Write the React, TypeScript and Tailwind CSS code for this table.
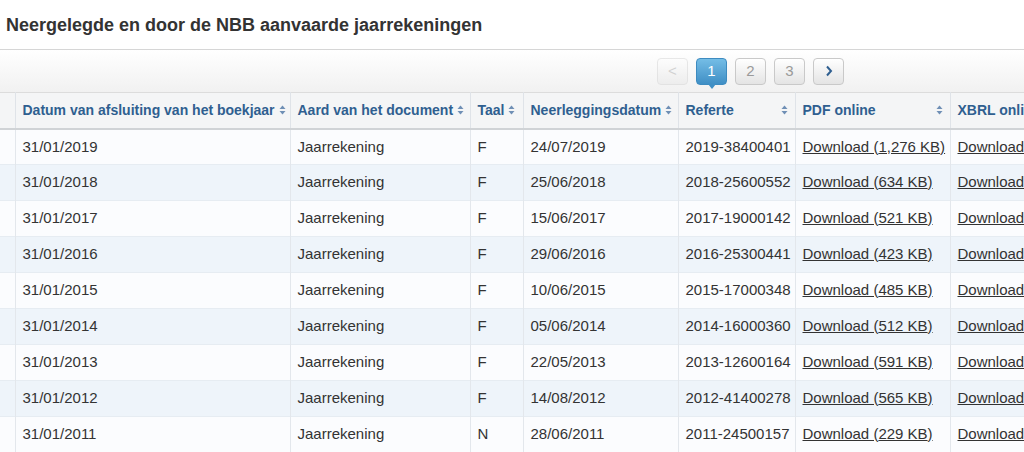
import React from 'react';

const rows = [
  { date: '31/01/2019', lang: 'F', filed: '24/07/2019', ref: '2019-38400401', size: '1,276 KB' },
  { date: '31/01/2018', lang: 'F', filed: '25/06/2018', ref: '2018-25600552', size: '634 KB' },
  { date: '31/01/2017', lang: 'F', filed: '15/06/2017', ref: '2017-19000142', size: '521 KB' },
  { date: '31/01/2016', lang: 'F', filed: '29/06/2016', ref: '2016-25300441', size: '423 KB' },
  { date: '31/01/2015', lang: 'F', filed: '10/06/2015', ref: '2015-17000348', size: '485 KB' },
  { date: '31/01/2014', lang: 'F', filed: '05/06/2014', ref: '2014-16000360', size: '512 KB' },
  { date: '31/01/2013', lang: 'F', filed: '22/05/2013', ref: '2013-12600164', size: '591 KB' },
  { date: '31/01/2012', lang: 'F', filed: '14/08/2012', ref: '2012-41400278', size: '565 KB' },
  { date: '31/01/2011', lang: 'N', filed: '28/06/2011', ref: '2011-24500157', size: '229 KB' },
];

const SortIcon = () => (
  <svg width="7" height="10" viewBox="0 0 7 10" className="inline-block shrink-0">
    <path d="M3.5 0.5 L6.5 4 L0.5 4 Z" fill="#6f8fb5" />
    <path d="M3.5 9.5 L6.5 6 L0.5 6 Z" fill="#6f8fb5" />
  </svg>
);

const Head = ({ label, spread }: { label: string; spread?: boolean }) => (
  <th className="h-[36px] px-[7px] text-left font-bold text-[14px] text-[#2f5f90] border-r border-[#dfe3e8] whitespace-nowrap">
    <div className={spread ? 'flex items-center justify-between' : 'flex items-center gap-[4px]'}>
      <span>{label}</span>
      <SortIcon />
    </div>
  </th>
);

const PageBtn = ({ children, active, faded }: { children: React.ReactNode; active?: boolean; faded?: boolean }) => (
  <div
    className={
      'relative w-[31px] h-[27px] rounded-[4px] flex items-center justify-center text-[15px] ' +
      (active
        ? 'bg-gradient-to-b from-[#74bde6] to-[#3f8fc5] border border-[#3d8bc0] text-white'
        : 'bg-gradient-to-b from-white to-[#e4e4e4] border border-[#c9c9c9] text-[#9a9a9a]') +
      (faded ? ' opacity-40' : '')
    }
  >
    {children}
    {active && (
      <span className="absolute left-1/2 -translate-x-1/2 -bottom-[5px] w-0 h-0 border-l-[4px] border-r-[4px] border-t-[5px] border-l-transparent border-r-transparent border-t-[#3f8fc5]" />
    )}
  </div>
);

export default function App() {
  return (
    <div className="w-[1024px] h-[452px] overflow-hidden bg-white" style={{ fontFamily: '"Liberation Sans", Arial, sans-serif' }}>
      <div className="h-[49px] flex items-center pl-[6px] pt-[2px]">
        <h1 className="text-[18px] font-bold text-[#333]">Neergelegde en door de NBB aanvaarde jaarrekeningen</h1>
      </div>
      <div className="h-[43px] border-t border-[#d6d6d6] bg-gradient-to-b from-white to-[#f1f1f1] flex items-center pl-[657px] gap-[8px]">
        <PageBtn faded>&lt;</PageBtn>
        <PageBtn active>1</PageBtn>
        <PageBtn>2</PageBtn>
        <PageBtn>3</PageBtn>
        <PageBtn>
          <svg width="8" height="12" viewBox="0 0 8 12">
            <path d="M2 1.5 L6 6 L2 10.5" fill="none" stroke="#2f5f90" strokeWidth="2" />
          </svg>
        </PageBtn>
      </div>
      <table className="table-fixed border-collapse w-[1100px] text-[15px] text-[#333]">
        <colgroup>
          <col className="w-[15px]" />
          <col className="w-[275px]" />
          <col className="w-[180px]" />
          <col className="w-[53px]" />
          <col className="w-[155px]" />
          <col className="w-[117px]" />
          <col className="w-[155px]" />
          <col className="w-[150px]" />
        </colgroup>
        <thead>
          <tr className="bg-[#f4f5f6] border-t border-[#dcdcdc] border-b-2 border-b-[#d0d3d6]">
            <th className="border-r border-[#dfe3e8]" />
            <Head label="Datum van afsluiting van het boekjaar" />
            <Head label="Aard van het document" />
            <Head label="Taal" />
            <Head label="Neerleggingsdatum" />
            <Head label="Referte" spread />
            <Head label="PDF online" spread />
            <th className="h-[36px] px-[7px] text-left font-bold text-[14px] text-[#2f5f90] whitespace-nowrap">XBRL online</th>
          </tr>
        </thead>
        <tbody>
          {rows.map((r, i) => (
            <tr key={r.ref} className={(i % 2 === 0 ? 'bg-[#fbfcfe]' : 'bg-[#eef4fa]') + ' border-b border-[#e6ecf2]'}>
              <td className="h-[36px] border-r border-[#e3e7ec]" />
              <td className="px-[7px] border-r border-[#e3e7ec]">{r.date}</td>
              <td className="px-[7px] border-r border-[#e3e7ec]">Jaarrekening</td>
              <td className="px-[7px] border-r border-[#e3e7ec]">{r.lang}</td>
              <td className="px-[7px] border-r border-[#e3e7ec]">{r.filed}</td>
              <td className="px-[7px] border-r border-[#e3e7ec] whitespace-nowrap">{r.ref}</td>
              <td className="px-[7px] border-r border-[#e3e7ec] whitespace-nowrap">
                <a className="underline text-[#333]">Download ({r.size})</a>
              </td>
              <td className="px-[7px] whitespace-nowrap">
                <a className="underline text-[#333]">Download</a>
              </td>
            </tr>
          ))}
        </tbody>
      </table>
    </div>
  );
}
